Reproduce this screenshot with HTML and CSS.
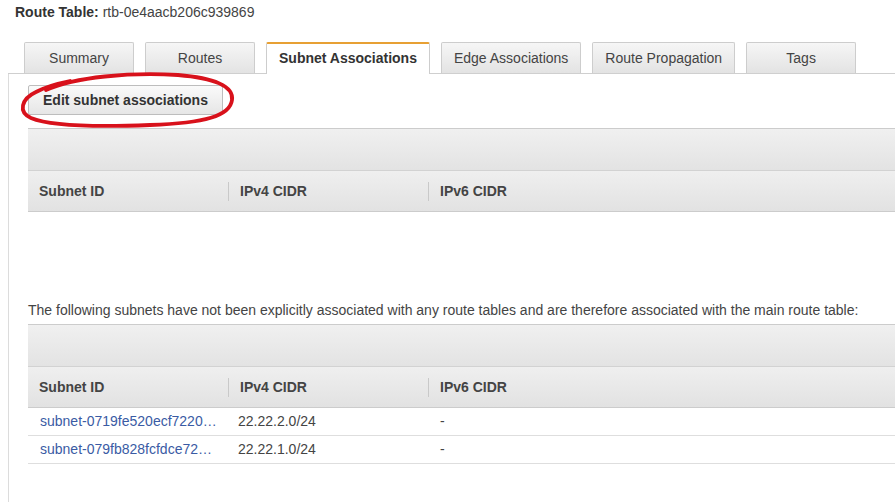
FILE: index.html
```html
<!DOCTYPE html>
<html>
<head>
<meta charset="utf-8">
<link rel="stylesheet" href="styles.css">
</head>
<body>
<div class="page">
  <div class="title"><b>Route Table:</b> rtb-0e4aacb206c939869</div>
  <div class="panel">
    <div class="tabs">
      <div class="tab">Summary</div>
      <div class="tab">Routes</div>
      <div class="tab active">Subnet Associations</div>
      <div class="tab">Edge Associations</div>
      <div class="tab">Route Propagation</div>
      <div class="tab">Tags</div>
    </div>
    <div class="content">
      <button class="btn">Edit subnet associations</button>
      <div class="tbl first">
        <div class="band"></div>
        <div class="row head">
          <div class="th">Subnet ID</div>
          <div class="th sep">IPv4 CIDR</div>
          <div class="th sep">IPv6 CIDR</div>
        </div>
      </div>
      <p class="note">The following subnets have not been explicitly associated with any route tables and are therefore associated with the main route table:</p>
      <div class="tbl second">
        <div class="band"></div>
        <div class="row head">
          <div class="th">Subnet ID</div>
          <div class="th sep">IPv4 CIDR</div>
          <div class="th sep">IPv6 CIDR</div>
        </div>
        <div class="row data">
          <div class="td c1"><a class="link" title="subnet-0719fe520ecf72204">subnet-0719fe520ecf7220…</a></div>
          <div class="td c2">22.22.2.0/24</div>
          <div class="td">-</div>
        </div>
        <div class="row data">
          <div class="td c1"><a class="link" title="subnet-079fb828fcfdce72e">subnet-079fb828fcfdce72…</a></div>
          <div class="td c2">22.22.1.0/24</div>
          <div class="td">-</div>
        </div>
      </div>
    </div>
  </div>
  <svg class="annot" width="260" height="140" viewBox="0 0 260 140">
    <path d="M 46 90 C 75 77, 130 72, 178 75 C 214 78, 234 86, 232 100 C 230 116, 205 123, 150 125 C 100 127, 50 126, 31 118 C 18 112, 21 99, 36 92 C 45 87, 55 84, 70 81" fill="none" stroke="#d8111b" stroke-width="3.8" stroke-linecap="round"/>
  </svg>
</div>
</body>
</html>
```
FILE: styles.css
```css
html, body {
  margin: 0;
  padding: 0;
  background: #fff;
}

body {
  font-family: "Liberation Sans", Arial, sans-serif;
  font-size: 14px;
  color: #444;
}

.page {
  position: relative;
  height: 502px;
  overflow: hidden;
}

.title {
  padding: 3px 0 0 15px;
  line-height: 18px;
  color: #444;
}

.title b {
  color: #333;
}

.panel {
  margin: 21px 0 0 8px;
}

.tabs {
  display: flex;
  align-items: flex-end;
  gap: 11px;
  height: 31px;
  padding-left: 16px;
  border-bottom: 1px solid #cfcfcf;
}

.tab {
  box-sizing: border-box;
  min-width: 110px;
  height: 31px;
  padding: 0 12px;
  line-height: 30px;
  text-align: center;
  color: #444;
  border: 1px solid #cdcdcd;
  border-bottom: none;
  border-radius: 2px 2px 0 0;
  background: linear-gradient(#f6f6f6, #e3e3e3);
  white-space: nowrap;
}

.tab.active {
  height: 32px;
  margin-bottom: -1px;
  line-height: 29px;
  border-top: 2px solid #e7a034;
  background: #fff;
  font-weight: bold;
  color: #333;
}

.content {
  border-left: 1px solid #dcdcdc;
  padding: 11px 0 0 19px;
  height: 460px;
}

.btn {
  display: block;
  box-sizing: border-box;
  height: 30px;
  margin: 0;
  padding: 0 14px;
  font-family: inherit;
  font-size: 14px;
  font-weight: bold;
  line-height: 28px;
  color: #333;
  border: 1px solid #bdbdbd;
  border-radius: 2px;
  background: linear-gradient(#fafafa, #e6e6e6);
}

.tbl {
  margin-top: 13px;
  border-top: 1px solid #cccccc;
}

.tbl.second {
  margin-top: 5px;
}

.band {
  height: 41px;
  background: linear-gradient(#f0f0f0, #e3e3e3);
  border-bottom: 1px solid #d2d2d2;
}

.row {
  display: grid;
  grid-template-columns: 200px 200px 1fr;
  border-bottom: 1px solid #d6d6d6;
}

.row.head {
  height: 40px;
  background: linear-gradient(#efefef, #e2e2e2);
  border-bottom-color: #cccccc;
}

.th {
  padding-left: 11px;
  line-height: 40px;
  font-weight: bold;
  color: #444;
}

.th.sep {
  padding-left: 12px;
  background: linear-gradient(#c9c9c9, #c9c9c9) no-repeat left center / 1px 19px;
}

.row.data {
  height: 27px;
  border-bottom-color: #dedede;
}

.td {
  padding: 0 12px;
  line-height: 27px;
  color: #444;
  white-space: nowrap;
  overflow: hidden;
  text-overflow: ellipsis;
}

.td.c1 {
  padding-right: 4px;
  color: #3a5ba4;
}

.td.c2 {
  padding-left: 10px;
}

.link {
  color: #3a5ba4;
  text-decoration: none;
}

.note {
  margin: 89px 0 0 0;
  line-height: 18px;
  color: #444;
}

.annot {
  position: absolute;
  left: 0;
  top: 0;
  pointer-events: none;
}
```
